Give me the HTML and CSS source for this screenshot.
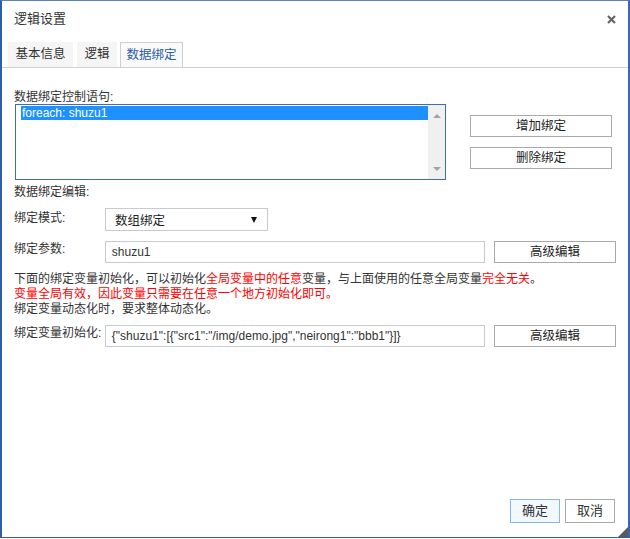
FILE: index.html
```html
<!DOCTYPE html>
<html lang="zh-CN">
<head>
<meta charset="utf-8">
<title>逻辑设置</title>
<link rel="stylesheet" href="styles.css">
</head>
<body>
<div class="dialog">
  <div class="header">
    <span class="title">逻辑设置</span>
    <svg class="close" width="9" height="9" viewBox="0 0 9 9"><path d="M1 1 L8 8 M8 1 L1 8" stroke="#666" stroke-width="2.2" fill="none"/></svg>
  </div>
  <div class="tabs">
    <div class="tab tab-basic">基本信息</div>
    <div class="tab tab-logic">逻辑</div>
    <div class="tab tab-bind active">数据绑定</div>
  </div>
  <div class="content">
    <div class="label top-label">数据绑定控制语句:</div>
    <div class="list-row">
      <div class="listbox">
        <div class="items">
          <div class="item selected">foreach: shuzu1</div>
        </div>
        <div class="scrollbar">
          <span class="arrow up"></span>
          <span class="arrow down"></span>
        </div>
      </div>
      <div class="list-actions">
        <div class="btn wide">增加绑定</div>
        <div class="btn wide">删除绑定</div>
      </div>
    </div>
    <div class="label section-label">数据绑定编辑:</div>
    <div class="form-row row-mode">
      <div class="field-label">绑定模式:</div>
      <div class="select"><span>数组绑定</span><span class="caret"></span></div>
    </div>
    <div class="form-row row-param">
      <div class="field-label">绑定参数:</div>
      <div class="input">shuzu1</div>
      <div class="btn adv">高级编辑</div>
    </div>
    <div class="notes">
      <div>下面的绑定变量初始化，可以初始化<span class="red">全局变量中的任意</span>变量，与上面使用的任意全局变量<span class="red">完全无关</span>。</div>
      <div class="red">变量全局有效，因此变量只需要在任意一个地方初始化即可。</div>
      <div>绑定变量动态化时，要求整体动态化。</div>
    </div>
    <div class="form-row row-init">
      <div class="field-label">绑定变量初始化:</div>
      <div class="input">{"shuzu1":[{"src1":"/img/demo.jpg","neirong1":"bbb1"}]}</div>
      <div class="btn adv">高级编辑</div>
    </div>
  </div>
  <div class="footer">
    <div class="btn foot primary">确定</div>
    <div class="btn foot">取消</div>
  </div>
  <span class="grip"></span>
</div>
</body>
</html>
```

FILE: styles.css
```css
html, body {
  margin: 0;
  padding: 0;
  background: #ffffff;
}

.dialog {
  box-sizing: border-box;
  width: 630px;
  height: 538px;
  border-top: 1px solid #5a80c0;
  border-bottom: 1px solid #2f5da6;
  border-left: 2px solid #2f5da6;
  border-right: 2px solid #3a67b0;
  box-shadow: 0 1px 0 #a9c6ee;
  display: flex;
  flex-direction: column;
  position: relative;
  font-family: "Liberation Sans", "Noto Sans CJK SC", sans-serif;
  font-size: 12px;
  color: #333;
  background: #fff;
}

.header {
  height: 41px;
  box-sizing: border-box;
  padding: 10px 12px 0 12px;
  display: flex;
  justify-content: space-between;
  align-items: flex-start;
}

.title {
  font-size: 13px;
  line-height: 16px;
  color: #333;
}

.close {
  margin-top: 4px;
  margin-right: 0;
}

.tabs {
  height: 26px;
  box-sizing: border-box;
  border-bottom: 1px solid #d0d0d0;
  display: flex;
  padding-left: 6px;
}

.tab {
  box-sizing: border-box;
  height: 25px;
  line-height: 25px;
  text-align: center;
  background: #f5f5f5;
  font-size: 12.5px;
  color: #333;
}

.tab-basic { width: 65px; margin-right: 4px; }
.tab-logic { width: 40px; margin-right: 3px; }
.tab-bind { width: 63px; }

.tab.active {
  background: #fafafa;
  border: 1px solid #cfcfcf;
  border-bottom: none;
  line-height: 24px;
  color: #2a5caa;
}

.content {
  flex: 1;
  padding: 0 12px;
}

.label {
  line-height: 14px;
}

.top-label {
  margin-top: 22px;
}

.list-row {
  display: flex;
  align-items: flex-start;
}

.listbox {
  box-sizing: border-box;
  width: 431px;
  height: 76px;
  margin-left: 1px;
  border: 1px solid #3c6eb4;
  display: flex;
}

.items {
  flex: 1;
  padding-top: 1px;
  padding-left: 5px;
}

.item {
  height: 14px;
  line-height: 14px;
  padding-left: 1px;
  font-size: 12px;
}

.item.selected {
  background: #1e90ff;
  color: #fff;
}

.scrollbar {
  width: 17px;
  background: #f0f0f0;
  display: flex;
  flex-direction: column;
  justify-content: space-between;
  align-items: center;
  padding: 9px 0 8px 0;
  box-sizing: border-box;
}

.arrow {
  width: 0;
  height: 0;
  border-left: 4px solid transparent;
  border-right: 4px solid transparent;
}

.arrow.up {
  border-bottom: 4px solid #a3a3a3;
}

.arrow.down {
  border-top: 4px solid #a3a3a3;
}

.list-actions {
  margin-left: 24px;
  padding-top: 11px;
  display: flex;
  flex-direction: column;
  gap: 10px;
}

.btn {
  box-sizing: border-box;
  border: 1px solid #aaaaaa;
  background: #fff;
  text-align: center;
  color: #222;
  font-size: 12.5px;
}

.btn.wide {
  width: 142px;
  height: 22px;
  line-height: 20px;
}

.section-label {
  margin-top: 5px;
}

.form-row {
  display: flex;
  align-items: flex-start;
}

.row-mode { margin-top: 9px; }
.row-param { margin-top: 10px; }
.row-init { margin-top: 8px; }

.field-label {
  width: 91px;
  line-height: 14px;
  padding-top: 1px;
}

.row-mode .field-label {
  padding-top: 3px;
}

.select {
  box-sizing: border-box;
  width: 163px;
  height: 23px;
  border: 1px solid #c6cbd1;
  padding: 0 9px 0 9px;
  display: flex;
  justify-content: space-between;
  align-items: center;
  font-size: 12.5px;
  color: #222;
}

.caret {
  width: 0;
  height: 0;
  border-left: 3.5px solid transparent;
  border-right: 3.5px solid transparent;
  border-top: 6px solid #111;
  margin-right: 1px;
}

.input {
  box-sizing: border-box;
  width: 381px;
  height: 22px;
  line-height: 20px;
  border: 1px solid #c6cbd1;
  padding-left: 6px;
  color: #333;
  white-space: nowrap;
  overflow: hidden;
}

.btn.adv {
  width: 122px;
  height: 22px;
  line-height: 20px;
  margin-left: 9px;
}

.notes {
  margin-top: 9px;
  line-height: 15px;
}

.red {
  color: #ff0000;
}

.footer {
  display: flex;
  justify-content: flex-end;
  gap: 5px;
  padding: 0 13px 14px 0;
}

.btn.foot {
  width: 50px;
  height: 24px;
  line-height: 22px;
  font-size: 13px;
  color: #333;
}

.btn.foot.primary {
  border-color: #86b6f2;
  background: #f2f8ff;
}

.grip {
  position: absolute;
  right: 0;
  bottom: 0;
  width: 0;
  height: 0;
  border-left: 10px solid transparent;
  border-bottom: 10px solid #5a5a5a;
}
```
